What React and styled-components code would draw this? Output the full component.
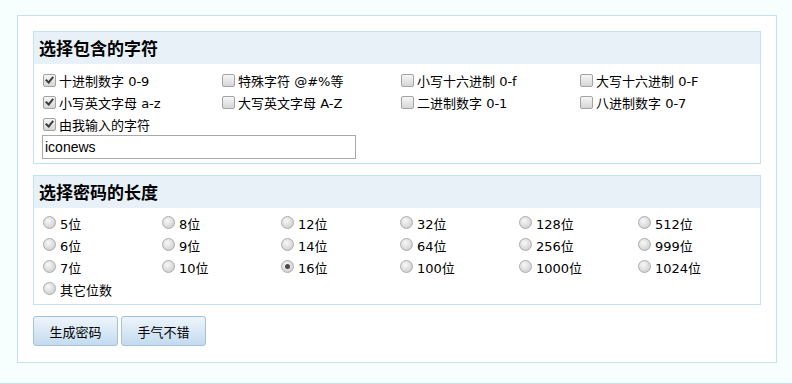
import React from 'react';
import styled, {createGlobalStyle} from 'styled-components';

const charOptions = [
  {label: '十进制数字', extra: '0-9', checked: true},
  {label: '特殊字符', extra: '@#%等', checked: false},
  {label: '小写十六进制', extra: '0-f', checked: false},
  {label: '大写十六进制', extra: '0-F', checked: false},
  {label: '小写英文字母', extra: 'a-z', checked: true},
  {label: '大写英文字母', extra: 'A-Z', checked: false},
  {label: '二进制数字', extra: '0-1', checked: false},
  {label: '八进制数字', extra: '0-7', checked: false},
];

const lengths = [
  '5', '8', '12', '32', '128', '512',
  '6', '9', '14', '64', '256', '999',
  '7', '10', '16', '100', '1000', '1024',
];

export default function App() {
  return (
    <>
      <GlobalStyle />
      <Page>
        <Panel>
          <Section>
            <SectionTitle>选择包含的字符</SectionTitle>
            <SectionBody>
              <CheckGrid>
                {charOptions.map((o) => (
                  <Option key={o.label}>
                    <CheckBox type="checkbox" defaultChecked={o.checked} />
                    <span>
                      {o.label} {o.extra}
                    </span>
                  </Option>
                ))}
              </CheckGrid>
              <Option>
                <CheckBox type="checkbox" defaultChecked />
                <span>由我输入的字符</span>
              </Option>
              <CustomInput defaultValue="iconews" />
            </SectionBody>
          </Section>

          <Section>
            <SectionTitle>选择密码的长度</SectionTitle>
            <SectionBody $top={4}>
              <RadioGrid>
                {lengths.map((n) => (
                  <Option key={n}>
                    <Radio type="radio" name="len" defaultChecked={n === '16'} />
                    <span>{n}位</span>
                  </Option>
                ))}
                <Option>
                  <Radio type="radio" name="len" />
                  <span>其它位数</span>
                </Option>
              </RadioGrid>
            </SectionBody>
          </Section>

          <Buttons>
            <Button>生成密码</Button>
            <Button>手气不错</Button>
          </Buttons>
        </Panel>
        <Footer />
      </Page>
    </>
  );
}

const GlobalStyle = createGlobalStyle`
  html, body {
    margin: 0;
    padding: 0;
    background: #f7fefe;
  }
  body {
    font-family: 'DejaVu Sans', 'Noto Sans CJK SC', sans-serif;
    font-size: 13px;
    color: #000;
  }
`;

const Page = styled.div`
  width: 792px;
  height: 384px;
  padding-top: 15px;
  box-sizing: border-box;
  display: flex;
  flex-direction: column;
`;

const Panel = styled.div`
  margin-left: 17px;
  width: 760px;
  height: 348px;
  box-sizing: border-box;
  border: 1px solid #c4e1f3;
  background: #fff;
  padding: 15px 15px 0 15px;
  display: flex;
  flex-direction: column;
  gap: 11px;
`;

const Footer = styled.div`
  margin-top: auto;
  height: 0;
  border-top: 1px solid #c4e1f3;
`;

const Section = styled.div`
  border: 1px solid #c4e1f3;
  width: 728px;
  box-sizing: border-box;
`;

const SectionTitle = styled.div`
  background: #e8f0f8;
  height: 32px;
  line-height: 32px;
  padding-left: 5px;
  font-size: 17px;
  font-weight: bold;
  font-family: 'Noto Sans CJK SC', sans-serif;
`;

const SectionBody = styled.div`
  padding: ${(p) => p.$top ?? 5}px 8px 4px 8px;
`;

const CheckGrid = styled.div`
  display: grid;
  grid-template-columns: repeat(4, 179px);
`;

const RadioGrid = styled.div`
  display: grid;
  grid-template-columns: repeat(6, 119px);
  padding-left: 1px;
`;

const Option = styled.label`
  display: flex;
  align-items: center;
  gap: 3px;
  height: 22px;
  white-space: nowrap;
`;

const CheckBox = styled.input`
  appearance: none;
  margin: 0 0 0 1px;
  width: 13px;
  height: 13px;
  box-sizing: border-box;
  border: 1px solid #a3a3a3;
  border-radius: 2px;
  background: linear-gradient(#f6f6f6, #d6d6d6);
  position: relative;
  flex: none;

  &:checked::after {
    content: '';
    position: absolute;
    left: 3px;
    top: 0px;
    width: 3px;
    height: 6px;
    border-right: 2px solid #3c3c3c;
    border-bottom: 2px solid #3c3c3c;
    transform: rotate(40deg);
  }
`;

const Radio = styled.input`
  appearance: none;
  margin: 0 1px 2px 0;
  width: 13px;
  height: 13px;
  box-sizing: border-box;
  border: 1px solid #acacac;
  border-radius: 50%;
  background: radial-gradient(circle at 40% 35%, #f8f8f8, #d2d2d2 75%);
  position: relative;
  flex: none;

  &:checked::after {
    content: '';
    position: absolute;
    left: 3px;
    top: 3px;
    width: 5px;
    height: 5px;
    border-radius: 50%;
    background: #4a4a4a;
  }
`;

const CustomInput = styled.input`
  display: block;
  width: 314px;
  height: 24px;
  box-sizing: border-box;
  margin: 0;
  border: 1px solid #a9a9a9;
  padding: 0 2px;
  font-family: 'Liberation Sans', sans-serif;
  font-size: 14px;
  color: #000;
  outline: none;
`;

const Buttons = styled.div`
  display: flex;
  gap: 3px;
`;

const Button = styled.button`
  width: 85px;
  height: 30px;
  box-sizing: border-box;
  border: 1px solid #a5c0d8;
  border-radius: 3px;
  background: linear-gradient(#eef5fb, #c3dbef);
  font-family: 'Noto Sans CJK SC', sans-serif;
  font-size: 13px;
  color: #000;
  padding: 0;
  cursor: pointer;
`;
